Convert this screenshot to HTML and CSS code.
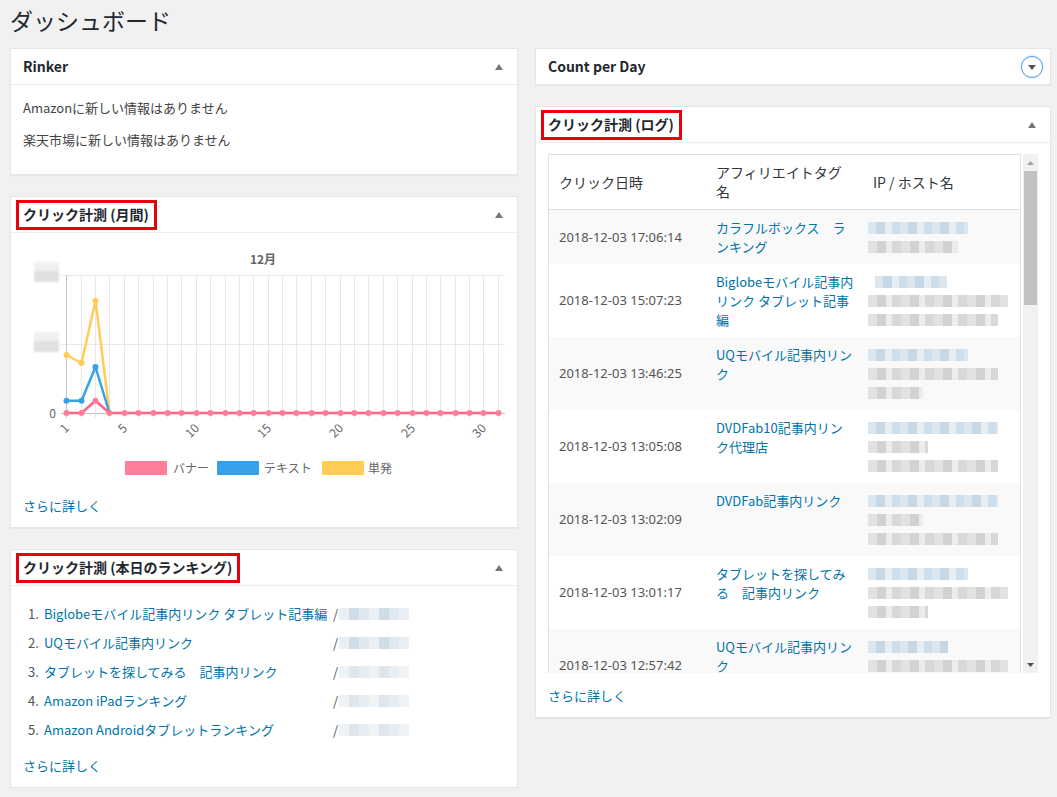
FILE: index.html
```html
<!DOCTYPE html>
<html lang="ja">
<head>
<meta charset="utf-8">
<title>ダッシュボード</title>
<link rel="stylesheet" href="styles.css">
</head>
<body>
<div class="wrap">
  <h1 class="page-title">ダッシュボード</h1>
  <div class="cols">
    <div class="col">
      <section class="postbox">
        <h2 class="hndle"><span class="ttl">Rinker</span><span class="toggle"><svg width="8" height="6" viewBox="0 0 8 6"><polygon points="4,0 8,6 0,6" class="tri"/></svg></span></h2>
        <div class="inside">
          <p>Amazonに新しい情報はありません</p>
          <p>楽天市場に新しい情報はありません</p>
        </div>
      </section>

      <section class="postbox">
        <h2 class="hndle"><span class="ttl"><span class="hl">クリック計測 (月間)</span></span><span class="toggle"><svg width="8" height="6" viewBox="0 0 8 6"><polygon points="4,0 8,6 0,6" class="tri"/></svg></span></h2>
        <div class="inside">
          <svg class="chart" width="482" height="240" viewBox="0 0 482 240">
            <defs><filter id="bl" x="-20%" y="-40%" width="140%" height="180%"><feGaussianBlur stdDeviation="1.2"/></filter></defs>
            <text x="240" y="22" class="ctitle" text-anchor="middle">12月</text>
            <g filter="url(#bl)">
              <rect x="11" y="20" width="25" height="9" fill="#f0f0f0"/>
              <rect x="11" y="29" width="25" height="11" fill="#e0e0e0"/>
              <rect x="11" y="90" width="25" height="9" fill="#f0f0f0"/>
              <rect x="11" y="99" width="25" height="11" fill="#e0e0e0"/>
            </g>
            <path class="grid" d="M58.5 33V176M72.5 33V176M86.5 33V176M101.5 33V176M115.5 33V176M130.5 33V176M144.5 33V176M158.5 33V176M173.5 33V176M187.5 33V176M202.5 33V176M216.5 33V176M230.5 33V176M245.5 33V176M259.5 33V176M273.5 33V176M288.5 33V176M302.5 33V176M317.5 33V176M331.5 33V176M345.5 33V176M360.5 33V176M374.5 33V176M389.5 33V176M403.5 33V176M417.5 33V176M432.5 33V176M446.5 33V176M460.5 33V176M475.5 33V176M38 33.5H482M38 102.5H482"/>
            <path class="axis" d="M43.5 33V176M38 171.5H482"/>
            <text x="33" y="175.5" class="tick" text-anchor="end">0</text>
            <text class="tick" text-anchor="end" transform="translate(47 187) rotate(-45)">1</text>
            <text class="tick" text-anchor="end" transform="translate(105 187) rotate(-45)">5</text>
            <text class="tick" text-anchor="end" transform="translate(177 187) rotate(-45)">10</text>
            <text class="tick" text-anchor="end" transform="translate(249 187) rotate(-45)">15</text>
            <text class="tick" text-anchor="end" transform="translate(321 187) rotate(-45)">20</text>
            <text class="tick" text-anchor="end" transform="translate(393 187) rotate(-45)">25</text>
            <text class="tick" text-anchor="end" transform="translate(464 187) rotate(-45)">30</text>

            <polyline class="ln yel" points="43.5,113 58.5,121 72.5,58.7 86.5,171"/>
            <g class="pt yelf"><circle cx="43.5" cy="113" r="3"/><circle cx="58.5" cy="121" r="3"/><circle cx="72.5" cy="58.7" r="3"/></g>
            <polyline class="ln blu" points="43.5,158.7 58.5,158.7 72.5,125 86.5,171"/>
            <g class="pt bluf"><circle cx="43.5" cy="158.7" r="3"/><circle cx="58.5" cy="158.7" r="3"/><circle cx="72.5" cy="125" r="3"/></g>
            <polyline class="ln pnk" points="43.5,171 58.5,171 72.5,158.7 86.5,171 475.5,171"/>
            <g class="pt pnkf">
              <circle cx="43.5" cy="171" r="3"/><circle cx="58.5" cy="171" r="3"/><circle cx="72.5" cy="158.7" r="3"/><circle cx="86.5" cy="171" r="3"/>
              <circle cx="101.5" cy="171" r="3"/><circle cx="115.5" cy="171" r="3"/><circle cx="130.5" cy="171" r="3"/><circle cx="144.5" cy="171" r="3"/>
              <circle cx="158.5" cy="171" r="3"/><circle cx="173.5" cy="171" r="3"/><circle cx="187.5" cy="171" r="3"/><circle cx="202.5" cy="171" r="3"/>
              <circle cx="216.5" cy="171" r="3"/><circle cx="230.5" cy="171" r="3"/><circle cx="245.5" cy="171" r="3"/><circle cx="259.5" cy="171" r="3"/>
              <circle cx="273.5" cy="171" r="3"/><circle cx="288.5" cy="171" r="3"/><circle cx="302.5" cy="171" r="3"/><circle cx="317.5" cy="171" r="3"/>
              <circle cx="331.5" cy="171" r="3"/><circle cx="345.5" cy="171" r="3"/><circle cx="360.5" cy="171" r="3"/><circle cx="374.5" cy="171" r="3"/>
              <circle cx="389.5" cy="171" r="3"/><circle cx="403.5" cy="171" r="3"/><circle cx="417.5" cy="171" r="3"/><circle cx="432.5" cy="171" r="3"/>
              <circle cx="446.5" cy="171" r="3"/><circle cx="460.5" cy="171" r="3"/><circle cx="475.5" cy="171" r="3"/>
            </g>

            <rect x="102" y="219" width="42" height="14" class="pnkf"/>
            <text x="150" y="230.5" class="lg">バナー</text>
            <rect x="194" y="219" width="42" height="14" class="bluf"/>
            <text x="241" y="230.5" class="lg">テキスト</text>
            <rect x="299" y="219" width="42" height="14" class="yelf"/>
            <text x="345" y="230.5" class="lg">単発</text>
          </svg>
          <p class="more"><a href="#">さらに詳しく</a></p>
        </div>
      </section>

      <section class="postbox">
        <h2 class="hndle"><span class="ttl"><span class="hl">クリック計測 (本日のランキング)</span></span><span class="toggle"><svg width="8" height="6" viewBox="0 0 8 6"><polygon points="4,0 8,6 0,6" class="tri"/></svg></span></h2>
        <div class="inside">
          <ol class="rank">
            <li><span class="num">1.</span><a href="#">Biglobeモバイル記事内リンク タブレット記事編</a><span class="sep">/<span class="mz r1"></span></span></li>
            <li><span class="num">2.</span><a href="#">UQモバイル記事内リンク</a><span class="sep">/<span class="mz r1"></span></span></li>
            <li><span class="num">3.</span><a href="#">タブレットを探してみる　記事内リンク</a><span class="sep">/<span class="mz r2"></span></span></li>
            <li><span class="num">4.</span><a href="#">Amazon iPadランキング</a><span class="sep">/<span class="mz r2"></span></span></li>
            <li><span class="num">5.</span><a href="#">Amazon Androidタブレットランキング</a><span class="sep">/<span class="mz r2"></span></span></li>
          </ol>
          <p class="more m2"><a href="#">さらに詳しく</a></p>
        </div>
      </section>
    </div>

    <div class="col">
      <section class="postbox closed">
        <h2 class="hndle"><span class="ttl">Count per Day</span><span class="toggle"><span class="circle"><svg width="8" height="5" viewBox="0 0 8 5"><polygon points="0,0 8,0 4,5" fill="#555"/></svg></span></span></h2>
      </section>

      <section class="postbox">
        <h2 class="hndle"><span class="ttl"><span class="hl">クリック計測 (ログ)</span></span><span class="toggle"><svg width="8" height="6" viewBox="0 0 8 6"><polygon points="4,0 8,6 0,6" class="tri"/></svg></span></h2>
        <div class="inside">
          <div class="logbox">
            <div class="logwrap">
              <table class="logtable">
                <thead>
                  <tr><th>クリック日時</th><th>アフィリエイトタグ<br>名</th><th>IP / ホスト名</th></tr>
                </thead>
                <tbody>
                  <tr>
                    <td class="date">2018-12-03 17:06:14</td>
                    <td class="tag"><a href="#">カラフルボックス　ラ<br>ンキング</a></td>
                    <td class="ip"><span class="ml"><span class="mz b w100"></span></span><span class="ml"><span class="mz g w90"></span></span></td>
                  </tr>
                  <tr>
                    <td class="date">2018-12-03 15:07:23</td>
                    <td class="tag"><a href="#">Biglobeモバイル記事内<br>リンク タブレット記事<br>編</a></td>
                    <td class="ip"><span class="ml"><span class="mz b w72 ind"></span></span><span class="ml"><span class="mz g w140"></span></span><span class="ml"><span class="mz g w130"></span></span></td>
                  </tr>
                  <tr>
                    <td class="date">2018-12-03 13:46:25</td>
                    <td class="tag"><a href="#">UQモバイル記事内リン<br>ク</a></td>
                    <td class="ip"><span class="ml"><span class="mz b w100"></span></span><span class="ml"><span class="mz g w130"></span></span><span class="ml"><span class="mz g w55"></span></span></td>
                  </tr>
                  <tr>
                    <td class="date">2018-12-03 13:05:08</td>
                    <td class="tag"><a href="#">DVDFab10記事内リン<br>ク代理店</a></td>
                    <td class="ip"><span class="ml"><span class="mz b w130"></span></span><span class="ml"><span class="mz g w60"></span></span><span class="ml"><span class="mz g w130"></span></span></td>
                  </tr>
                  <tr>
                    <td class="date">2018-12-03 13:02:09</td>
                    <td class="tag"><a href="#">DVDFab記事内リンク</a></td>
                    <td class="ip"><span class="ml"><span class="mz b w130"></span></span><span class="ml"><span class="mz g w55"></span></span><span class="ml"><span class="mz g w130"></span></span></td>
                  </tr>
                  <tr>
                    <td class="date">2018-12-03 13:01:17</td>
                    <td class="tag"><a href="#">タブレットを探してみ<br>る　記事内リンク</a></td>
                    <td class="ip"><span class="ml"><span class="mz b w100"></span></span><span class="ml"><span class="mz g w140"></span></span><span class="ml"><span class="mz g w60"></span></span></td>
                  </tr>
                  <tr>
                    <td class="date">2018-12-03 12:57:42</td>
                    <td class="tag"><a href="#">UQモバイル記事内リン<br>ク</a></td>
                    <td class="ip"><span class="ml"><span class="mz b w80"></span></span><span class="ml"><span class="mz g w140"></span></span><span class="ml"><span class="mz g w100"></span></span></td>
                  </tr>
                </tbody>
              </table>
            </div>
            <div class="sbar">
              <span class="sb-btn"><svg width="7" height="4" viewBox="0 0 7 4"><polygon points="3.5,0 7,4 0,4" fill="#a3a3a3"/></svg></span>
              <span class="sb-thumb"></span>
              <span class="sb-track"></span>
              <span class="sb-btn"><svg width="7" height="4" viewBox="0 0 7 4"><polygon points="0,0 7,0 3.5,4" fill="#505050"/></svg></span>
            </div>
          </div>
          <p class="more m3"><a href="#">さらに詳しく</a></p>
        </div>
      </section>
    </div>
  </div>
</div>
</body>
</html>
```

FILE: styles.css
```css
* { box-sizing: border-box; }
html, body { margin: 0; background: #f1f1f1; }
body {
  font-family: "Noto Sans CJK JP", "Noto Sans", sans-serif;
  font-size: 13px;
  line-height: 19px;
  color: #444;
}
a { color: #0073aa; text-decoration: none; }

.wrap { padding: 6px 0 0 10px; }
.page-title {
  margin: 0;
  font-size: 23px;
  line-height: 29px;
  font-weight: 400;
  color: #23282d;
}

.cols {
  display: grid;
  grid-template-columns: 508px 516px;
  column-gap: 17px;
  margin-top: 13px;
  align-items: start;
}
.col { display: flex; flex-direction: column; gap: 21px; }

.postbox {
  background: #fff;
  border: 1px solid #e5e5e5;
  box-shadow: 0 1px 1px rgba(0, 0, 0, .04);
}
.hndle {
  display: flex;
  align-items: center;
  height: 36px;
  margin: 0;
  padding-left: 12px;
  font-size: 14px;
  line-height: 19px;
  font-weight: 700;
  color: #23282d;
  border-bottom: 1px solid #eee;
}
.closed .hndle { border-bottom: 0; height: 35px; }
.ttl { flex: 1; }
.toggle {
  width: 36px;
  height: 35px;
  display: flex;
  align-items: center;
  justify-content: center;
}
.tri { fill: #72777c; }
.circle {
  width: 22px;
  height: 22px;
  border-radius: 50%;
  border: 1.5px solid #5b9dd9;
  box-shadow: 0 0 2px rgba(30, 140, 190, .5);
  display: flex;
  align-items: center;
  justify-content: center;
  padding-top: 1px;
}

.hl { position: relative; display: inline-block; }
.hl::after {
  content: "";
  position: absolute;
  top: -5px;
  right: -8px;
  bottom: -6px;
  left: -7px;
  border: 3px solid #e8000d;
}

.inside { padding: 0 12px 12px; }
.inside p { margin: 13px 0; }
.inside p.more { margin: 14px 0 0; }
.inside p.more.m2 { margin-top: 17px; }
.inside p.more.m3 { margin-top: 13px; }

/* chart */
.chart { display: block; margin-top: 9px; overflow: visible; }
.chart text { font-family: "Noto Sans CJK JP", "Noto Sans", sans-serif; }
.ctitle { font-size: 12px; font-weight: 700; fill: #666; }
.tick { font-size: 12px; fill: #666; }
.lg { font-size: 12px; fill: #666; }
.grid { stroke: #e8e8e8; stroke-width: 1; fill: none; }
.axis { stroke: #c4c4c4; stroke-width: 1; fill: none; }
.ln { fill: none; stroke-width: 2.5; stroke-linejoin: round; }
.ln.yel { stroke: #ffcd56; }
.ln.blu { stroke: #36a2eb; }
.ln.pnk { stroke: #ff6384; }
.yelf { fill: #ffcd56; }
.bluf { fill: #36a2eb; }
.pnkf { fill: #ff7f9a; }

/* ranking */
.rank {
  list-style: none;
  margin: 18px 0 0;
  padding: 0 0 0 5px;
  display: flex;
  flex-direction: column;
  gap: 10px;
}
.rank li {
  display: grid;
  grid-template-columns: 16px 289px auto;
  align-items: center;
}
.rank .num { color: #555; }
.rank a { white-space: nowrap; }
.rank .sep { display: flex; align-items: center; color: #555; }
.rank .sep .mz { margin-left: 1px; width: 70px; height: 12px; }

/* mosaics */
.mz { display: block; height: 12px; filter: blur(.7px); }
.mz.b {
  background: repeating-linear-gradient(90deg, #dbe6ef 0 8px, #c6d8e6 8px 17px, #e6eef4 17px 24px, #cddde9 24px 32px);
}
.mz.g {
  background: repeating-linear-gradient(90deg, #e2e2e2 0 9px, #d2d2d2 9px 18px, #ececec 18px 24px, #d8d8d8 24px 33px);
}
.mz.r1 {
  background: repeating-linear-gradient(90deg, #e9eff4 0 10px, #cfdde8 10px 20px, #dfe8ef 20px 30px);
}
.mz.r2 {
  background: repeating-linear-gradient(90deg, #f0f3f6 0 10px, #dde6ed 10px 20px, #e8edf1 20px 30px);
}
.w55 { width: 55px; }
.w60 { width: 60px; }
.w72 { width: 72px; }
.w80 { width: 80px; }
.w90 { width: 90px; }
.w100 { width: 100px; }
.w130 { width: 130px; }
.w140 { width: 140px; }
.ind { margin-left: 7px; }

/* log table */
.logbox { display: flex; height: 519px; margin-top: 11px; }
.logwrap { flex: 1; min-width: 0; overflow: hidden; }
.logtable {
  width: 100%;
  table-layout: fixed;
  border-collapse: separate;
  border-spacing: 0;
  border: 1px solid #e1e1e1;
}
.logtable th {
  padding: 8px 10px;
  font-size: 14px;
  line-height: 19px;
  font-weight: 400;
  text-align: left;
  color: #32373c;
  border-bottom: 1px solid #e1e1e1;
  vertical-align: middle;
}
.logtable td {
  padding: 8px 10px;
  line-height: 19px;
  vertical-align: top;
}
.logtable tbody tr:nth-child(odd) td { background: #f9f9f9; }
.logtable td.date {
  vertical-align: middle;
  font-family: "Noto Sans", "Noto Sans CJK JP", sans-serif;
  color: #555;
  white-space: nowrap;
}
.logtable td.tag a { white-space: nowrap; }
.logtable td.ip { padding-left: 5px; }
.ml { display: flex; align-items: center; height: 19px; }

.sbar {
  width: 15px;
  margin-left: 2px;
  background: #f1f1f1;
  display: flex;
  flex-direction: column;
}
.sb-btn {
  height: 17px;
  display: flex;
  align-items: center;
  justify-content: center;
}
.sb-thumb { height: 134px; margin: 0 1px; background: #c1c1c1; }
.sb-track { flex: 1; }
```
